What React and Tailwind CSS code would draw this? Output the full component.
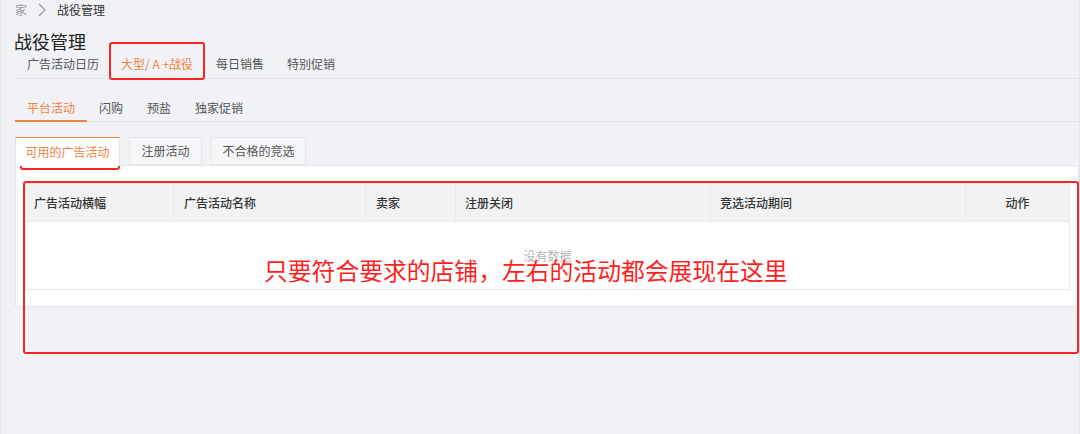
import React from "react";

const font = { fontFamily: '"Noto Sans CJK SC", "Noto Sans", sans-serif' };

export default function App() {
  const cols = [
    { w: "w-[148px]", t: "广告活动横幅", c: "pl-[8px]" },
    { w: "w-[192px]", t: "广告活动名称", c: "pl-[10px]" },
    { w: "w-[90px]", t: "卖家", c: "pl-[10px]" },
    { w: "w-[255px]", t: "注册关闭", c: "pl-[9px]" },
    { w: "w-[255px]", t: "竞选活动期间", c: "pl-[9px]" },
    { w: "flex-1", t: "动作", c: "justify-center" },
  ];
  return (
    <div
      className="relative w-[1080px] h-[434px] overflow-hidden bg-[#f1f2f6] border-l border-r border-[#e4e5ea] text-[12px]"
      style={font}
    >
      {/* breadcrumb */}
      <div className="h-[20px] pl-[14px] flex items-center leading-[16px]">
        <span className="text-[#9a9a9a]">家</span>
        <svg className="ml-[10px] mr-[10px]" width="10" height="14" viewBox="0 0 10 14">
          <polyline points="2,1 8,7 2,13" fill="none" stroke="#9a9a9a" strokeWidth="1.2" />
        </svg>
        <span className="text-[#333]">战役管理</span>
      </div>

      {/* title */}
      <div className="mt-[8px] pl-[13px] h-[26px] leading-[26px] text-[18px] text-[#222]">战役管理</div>

      {/* tabs row 1 */}
      <div className="ml-[14px] h-[25px] flex border-b border-[#e3e4e8] leading-[16px] pt-[2px]">
        <div className="px-[12px] text-[#555]">广告活动日历</div>
        <div className="pl-[10px] pr-[11px] text-[#f0833f]">大型/ A +战役</div>
        <div className="px-[12px] text-[#555]">每日销售</div>
        <div className="px-[11px] text-[#555]">特别促销</div>
      </div>

      {/* tabs row 2 */}
      <div className="ml-[14px] flex border-b border-[#e3e4e8] leading-[16px]">
        <div className="px-[12px] pt-[21px] pb-[4px] border-b-2 border-[#f0833f] text-[#f0833f] -mb-px">平台活动</div>
        <div className="px-[12px] pt-[21px] pb-[4px] text-[#555]">闪购</div>
        <div className="px-[12px] pt-[21px] pb-[4px] text-[#555]">预盐</div>
        <div className="px-[12px] pt-[21px] pb-[4px] text-[#555]">独家促销</div>
      </div>

      {/* card tabs */}
      <div className="ml-[14px] mt-[15px] flex gap-[9px] h-[28px] leading-[16px]">
        <div className="w-[105px] h-[29px] bg-white border-t border-[#f0833f] border-l border-r border-l-[#e6e6ea] border-r-[#e6e6ea] flex items-center justify-center text-[#f0833f] relative z-10">
          可用的广告活动
        </div>
        <div className="w-[73px] bg-[#f5f6f8] border border-[#e6e6ea] flex items-center justify-center text-[#555]">
          注册活动
        </div>
        <div className="w-[95px] bg-[#f5f6f8] border border-[#e6e6ea] flex items-center justify-center text-[#555]">
          不合格的竞选
        </div>
      </div>

      {/* panel */}
      <div className="ml-[14px] w-[1064px] bg-white border border-[#e6e6ea] pt-[17px] pb-[16px] pl-[9px] pr-[8px]">
        <div className="border border-[#e8e8ec]">
          <div className="flex h-[38px] bg-[#f2f2f3] border-b border-[#e8e8ec]">
            {cols.map((c, i) => (
              <div
                key={i}
                className={`${c.w} ${c.c} flex items-center font-medium text-[#333] ${i < cols.length - 1 ? "border-r border-[#e8e8ec]" : ""}`}
              >
                {c.t}
              </div>
            ))}
          </div>
          <div className="h-[67px] flex items-center justify-center text-[#b5b5b5] text-[12px]">没有数据</div>
        </div>
      </div>

      {/* annotations */}
      <div className="absolute left-[108px] top-[42px] w-[96px] h-[38px] border-2 border-[#ff2424] rounded-[3px]" />
      <div className="absolute left-[19px] top-[139px] w-[100px] h-[31px] border-2 border-[#ff2424] rounded-[3px]" />
      <div className="absolute left-[22px] top-[181px] w-[1056px] h-[173px] border-2 border-[#ff2424] rounded-[3px]" />
      <div className="absolute left-[263px] top-[255px] text-[23.8px] leading-[30px] text-[#ff1f1f] whitespace-nowrap">
        只要符合要求的店铺，左右的活动都会展现在这里
      </div>
    </div>
  );
}
